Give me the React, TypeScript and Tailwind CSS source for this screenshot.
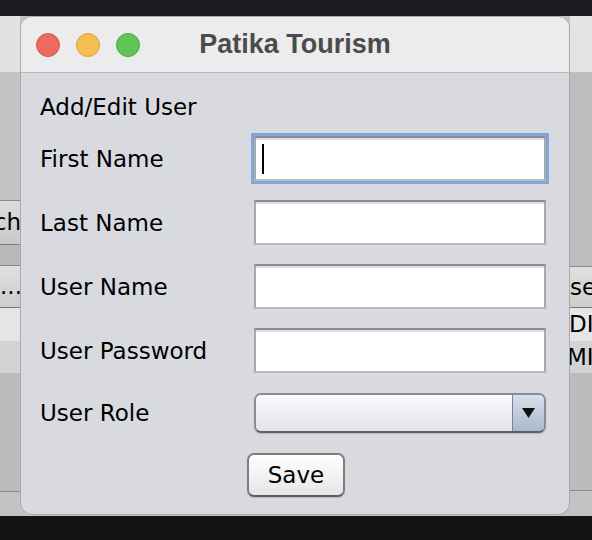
import * as React from "react"

const uiFont = { fontFamily: '"DejaVu Sans", "Noto Sans", sans-serif' }

function Field({ label, focused }: { label: string; focused?: boolean }) {
  return (
    <div className="flex h-[45px] items-center">
      <div className="w-[214px] text-[23px] leading-[28px] text-black">{label}</div>
      <div
        className={
          "relative h-[45px] w-[292px] border-2 border-[#a9a9a9] border-t-[#8d8d8d] border-b-[#bbbbbb] bg-white " +
          (focused
            ? "shadow-[0_0_0_3px_#80a7d8,inset_0_2px_0_#dedede]"
            : "shadow-[inset_0_2px_0_#e2e2e2]")
        }
      >
        {focused && <div className="absolute left-[6px] top-[6px] h-[30px] w-[2px] bg-black" />}
      </div>
    </div>
  )
}

function LeftStrip() {
  return (
    <div className="flex w-[20px] shrink-0 flex-col overflow-hidden text-[23px] text-black" style={uiFont}>
      <div className="h-[56px] bg-[#e2e2e2]" />
      <div className="h-[128px] bg-[#c3c3c5]" />
      <div className="h-px bg-[#8a8a8a]" />
      <div className="flex h-[43px] items-center justify-end bg-gradient-to-b from-[#dcdcdc] to-[#c9c9c9] leading-none">
        <span className="-mr-[1px]">ch</span>
      </div>
      <div className="h-px bg-[#7e7e7e]" />
      <div className="h-[20px] bg-[#b9b9bb]" />
      <div className="h-px bg-[#8a8a8a]" />
      <div className="flex h-[41px] items-center justify-end bg-gradient-to-b from-[#e0e0e0] to-[#cdcdcd] leading-none">
        <span className="-mr-[2px]">...</span>
      </div>
      <div className="h-px bg-[#777777]" />
      <div className="h-[33px] bg-[#e6e6e6]" />
      <div className="h-[32px] bg-[#d3d3d3]" />
      <div className="h-[118px] bg-[#bcbcbe]" />
      <div className="h-px bg-[#8a8a8a]" />
      <div className="flex-1 bg-[#c3c3c5]" />
    </div>
  )
}

function RightStrip() {
  return (
    <div className="flex w-[22px] shrink-0 flex-col overflow-hidden whitespace-nowrap text-[23px] text-black" style={uiFont}>
      <div className="h-[56px] bg-[#e4e4e4]" />
      <div className="h-[194px] bg-[#bdbdbf]" />
      <div className="h-px bg-[#8a8a8a]" />
      <div className="flex h-[40px] items-center bg-gradient-to-b from-[#e0e0e0] to-[#cdcdcd] leading-none">
        <span>se</span>
      </div>
      <div className="h-px bg-[#777777]" />
      <div className="flex h-[33px] items-center bg-[#e6e6e6] leading-none">
        <span className="-ml-[1px]">DI</span>
      </div>
      <div className="flex h-[32px] items-center bg-[#d3d3d3] leading-none">
        <span className="-ml-[3px]">MI</span>
      </div>
      <div className="h-[117px] bg-[#bcbcbe]" />
      <div className="h-px bg-[#8a8a8a]" />
      <div className="flex-1 bg-[#c3c3c5]" />
    </div>
  )
}

function Dialog() {
  return (
    <div className="flex h-[499px] w-[550px] shrink-0 flex-col overflow-hidden rounded-[12px] border border-[#a9a9ab] bg-[#d9dadf]">
      <div className="relative flex h-[56px] shrink-0 items-center gap-[16px] border-b border-[#b6b6b6] bg-[#ececec] pl-[15px]">
        <div className="h-[24px] w-[24px] rounded-full border border-[#d5564b] bg-[#ee6a5f]" />
        <div className="h-[24px] w-[24px] rounded-full border border-[#d9a23a] bg-[#f5bf4f]" />
        <div className="h-[24px] w-[24px] rounded-full border border-[#4da63f] bg-[#61c555]" />
        <div
          className="absolute inset-x-0 top-0 flex h-full items-center justify-center text-[27px] font-bold text-[#4b4b4b]"
          style={{ fontFamily: '"Liberation Sans", Arial, sans-serif' }}
        >
          Patika Tourism
        </div>
      </div>

      <div className="flex flex-col pl-[19px] pt-[20px]" style={uiFont}>
        <div className="h-[28px] text-[23px] leading-[28px] text-black">Add/Edit User</div>
        <div className="mt-[15px] flex flex-col gap-[19px]">
          <Field label="First Name" focused />
          <Field label="Last Name" />
          <Field label="User Name" />
          <Field label="User Password" />
        </div>

        <div className="mt-[20px] flex h-[40px] items-center">
          <div className="w-[214px] text-[23px] leading-[28px] text-black">User Role</div>
          <div className="flex h-[40px] w-[292px] overflow-hidden rounded-[7px] border-2 border-[#8c8c8c] border-b-[#5f5f5f] shadow-[0_1px_1px_rgba(0,0,0,0.15)]">
            <div className="flex-1 bg-gradient-to-b from-[#fbfbfc] via-[#eceef1] to-[#e2e4e8]" />
            <div className="flex w-[32px] items-center justify-center border-l border-[#76849a] bg-gradient-to-b from-[#d7e0ec] to-[#a8b8ce]">
              <svg width="13" height="10" viewBox="0 0 13 10">
                <path d="M0 0 L13 0 L6.5 10 Z" fill="#111" />
              </svg>
            </div>
          </div>
        </div>

        <div className="mt-[20px] flex h-[44px]">
          <button className="ml-[207px] h-[44px] w-[98px] rounded-[7px] border-2 border-[#7e7e7e] border-b-[#5c5c5c] bg-gradient-to-b from-[#ffffff] via-[#f2f2f2] to-[#e6e6e6] text-[23px] leading-none text-black shadow-[0_1px_1px_rgba(0,0,0,0.15)]">
            Save
          </button>
        </div>
      </div>
    </div>
  )
}

export default function App() {
  return (
    <div className="flex h-[540px] w-[592px] flex-col bg-[#1c1d20]">
      <div className="h-[16px] shrink-0 bg-[#1c1d20]" />
      <div className="flex h-[500px] shrink-0 bg-[#c3c3c5]">
        <LeftStrip />
        <Dialog />
        <RightStrip />
      </div>
      <div className="flex-1 bg-[#141416]" />
    </div>
  )
}
